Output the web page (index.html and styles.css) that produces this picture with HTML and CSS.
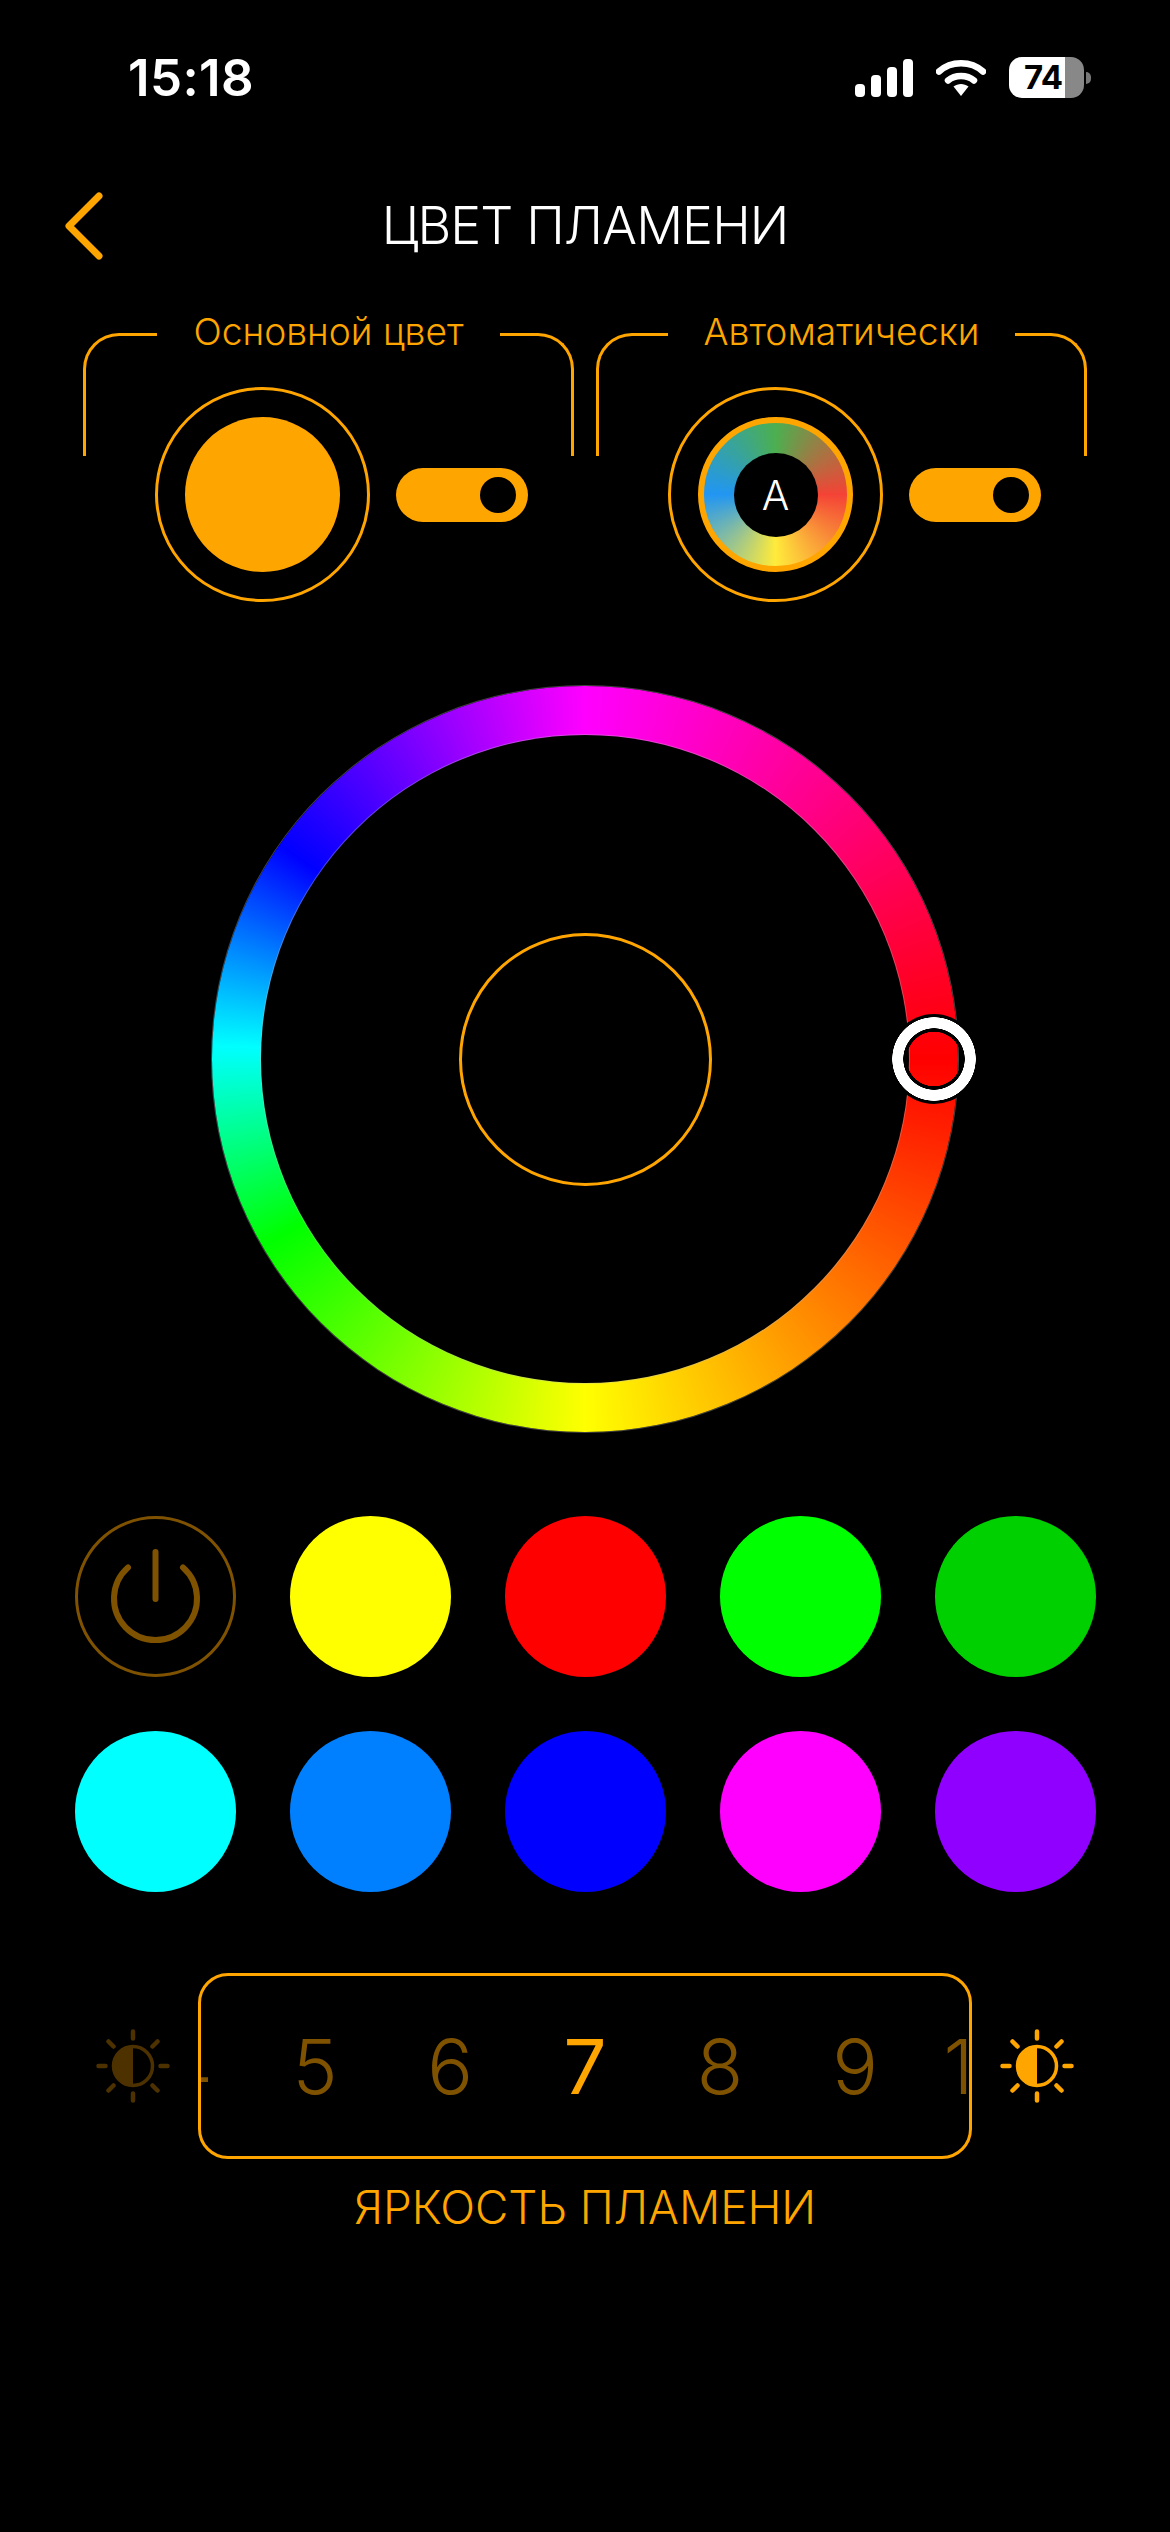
FILE: index.html
```html
<!DOCTYPE html>
<html lang="ru">
<head>
<meta charset="utf-8">
<title>Цвет пламени</title>
<link rel="stylesheet" href="styles.css">
</head>
<body>
<div class="status">
  <span class="time">15:18</span>
  <div class="status-icons">
    <svg class="signal" width="58" height="38" viewBox="0 0 58 38"><rect x="0" y="25" width="10" height="13" rx="4" fill="#fff"/><rect x="16" y="16" width="10" height="22" rx="4" fill="#fff"/><rect x="32" y="8" width="10" height="30" rx="4" fill="#fff"/><rect x="48" y="0" width="10" height="38" rx="4" fill="#fff"/></svg>
    <svg class="wifi" width="50" height="38" viewBox="0 0 50 38"><path d="M3 12.500C15 1.500 35 1.500 47 12.500" fill="none" stroke="#fff" stroke-width="6.500" stroke-linecap="round"/><path d="M12 21.500C19 15.500 31 15.500 38 21.500" fill="none" stroke="#fff" stroke-width="6.500" stroke-linecap="round"/><path d="M17.500 27.500C22 24 28 24 32.500 27.500L25 37Z" fill="#fff"/></svg>
    <div class="battery"><div class="battery-body">74</div><div class="battery-nub"></div></div>
  </div>
</div>

<header class="header">
  <svg class="back" width="38" height="68" viewBox="0 0 38 68"><path d="M34 4L4 34L34 64" fill="none" stroke="#ffa500" stroke-width="7" stroke-linecap="round" stroke-linejoin="round"/></svg>
  <h1 class="title">ЦВЕТ ПЛАМЕНИ</h1>
  <span></span>
</header>

<section class="modes">
  <div class="frame">
    <div class="frame-label">Основной цвет</div>
    <div class="frame-row">
      <div class="halo"><div class="dot"></div></div>
      <div class="toggle"><div class="knob"></div></div>
    </div>
  </div>
  <div class="frame">
    <div class="frame-label">Автоматически</div>
    <div class="frame-row">
      <div class="halo"><div class="dot dot-auto"><div class="dot-hole">A</div></div></div>
      <div class="toggle"><div class="knob"></div></div>
    </div>
  </div>
</section>

<section class="wheel">
  <div class="wheel-hole"><div class="wheel-center"></div></div>
  <div class="thumb"></div>
</section>

<section class="swatches">
  <div class="swatch power">
    <svg width="155" height="155" viewBox="0 0 155 155"><path d="M50 48.500A41.500 41.500 0 1 0 105 48.500" fill="none" stroke="#7f5200" stroke-width="6" stroke-linecap="round"/><path d="M77.500 33V80" fill="none" stroke="#7f5200" stroke-width="6" stroke-linecap="round"/></svg>
  </div>
  <div class="swatch yellow"></div>
  <div class="swatch red"></div>
  <div class="swatch lime"></div>
  <div class="swatch green"></div>
  <div class="swatch cyan"></div>
  <div class="swatch azure"></div>
  <div class="swatch blue"></div>
  <div class="swatch magenta"></div>
  <div class="swatch violet"></div>
</section>

<section class="brightness">
  <svg class="sun sun-dim" width="74" height="74" viewBox="0 0 74 74"><circle cx="37" cy="37" r="19.500" fill="none" stroke="currentColor" stroke-width="3.500"/><path d="M37 17.500A19.500 19.500 0 0 0 37 56.500Z" fill="currentColor"/><path d="M37 2.500V9.500M37 64.500V71.500M2.500 37H9.500M64.500 37H71.500M12.500 12.500L17.500 17.500M61.500 12.500L56.500 17.500M12.500 61.500L17.500 56.500M61.500 61.500L56.500 56.500" fill="none" stroke="currentColor" stroke-width="4.500" stroke-linecap="round"/></svg>
  <div class="scale">
    <span class="num num-start">4</span><span class="num">5</span><span class="num">6</span><span class="num num-on">7</span><span class="num">8</span><span class="num">9</span><span class="num num-end">10</span>
  </div>
  <svg class="sun" width="74" height="74" viewBox="0 0 74 74"><circle cx="37" cy="37" r="19.500" fill="none" stroke="currentColor" stroke-width="3.500"/><path d="M37 17.500A19.500 19.500 0 0 0 37 56.500Z" fill="currentColor"/><path d="M37 2.500V9.500M37 64.500V71.500M2.500 37H9.500M64.500 37H71.500M12.500 12.500L17.500 17.500M61.500 12.500L56.500 17.500M12.500 61.500L17.500 56.500M61.500 61.500L56.500 56.500" fill="none" stroke="currentColor" stroke-width="4.500" stroke-linecap="round"/></svg>
</section>
<div class="brightness-label">ЯРКОСТЬ ПЛАМЕНИ</div>
</body>
</html>
```

FILE: styles.css
```css
* { box-sizing: border-box; }
html, body { margin: 0; padding: 0; background: #000; }
body {
  width: 1170px;
  min-height: 2532px;
  padding-top: 57px;
  font-family: "Inter", "Liberation Sans", sans-serif;
  color: #ffa500;
  overflow: hidden;
}

/* status bar */
.status {
  display: flex;
  justify-content: space-between;
  align-items: center;
  height: 41px;
  padding: 0 79px 0 128px;
}
.time { font-size: 51px; font-weight: 600; color: #fff; line-height: 41px; letter-spacing: 0.4px; }
.status-icons { display: flex; align-items: center; gap: 23px; }
.signal, .wifi { display: block; }
.battery { display: flex; align-items: center; gap: 2px; }
.battery-body {
  width: 75px;
  height: 41px;
  border-radius: 13px;
  background: linear-gradient(90deg, #fff 56px, #888 56px);
  color: #000;
  font-size: 33px;
  font-weight: 700;
  line-height: 41px;
  padding-left: 15px;
  letter-spacing: -0.5px;
}
.battery-nub { width: 5px; height: 12px; border-radius: 0 6px 6px 0; background: #777; }

/* header */
.header {
  display: grid;
  grid-template-columns: 1fr auto 1fr;
  align-items: center;
  height: 66px;
  margin-top: 94px;
  padding: 0 65px;
}
.back { display: block; }
.title { margin: 0; font-size: 52px; font-weight: 300; color: #fff; line-height: 66px; white-space: nowrap; letter-spacing: -0.9px; }

/* mode frames */
.modes {
  display: flex;
  justify-content: center;
  gap: 22px;
  height: 123px;
  margin-top: 75px;
}
.frame {
  width: 491px;
  height: 123px;
  border: 3px solid #ffa500;
  border-bottom: 0;
  border-radius: 36px 36px 0 0;
  display: flex;
  flex-direction: column;
}
.frame-label {
  align-self: center;
  margin-top: -27px;
  padding: 0 36px;
  background: #000;
  font-size: 37.2px;
  font-weight: 300;
  line-height: 46px;
  white-space: nowrap;
}
.frame-row {
  display: flex;
  align-items: center;
  gap: 26px;
  margin-top: 32px;
  padding-left: 69px;
  flex: none;
}
.halo {
  width: 215px;
  height: 215px;
  border: 3px solid #ffa500;
  border-radius: 50%;
  display: flex;
  align-items: center;
  justify-content: center;
  flex: none;
}
.dot { width: 155px; height: 155px; border-radius: 50%; background: #ffa500; display: flex; align-items: center; justify-content: center; }
.dot-auto {
  border: 6px solid #ffa500;
  background: conic-gradient(from 90deg, #f44336, #ffeb3b, #2196f3, #4caf50, #f44336);
  background-origin: border-box;
}
.dot-hole {
  width: 84px;
  height: 84px;
  border-radius: 50%;
  background: #000;
  color: #fff;
  font-size: 41px;
  font-weight: 300;
  display: flex;
  align-items: center;
  justify-content: center;
}
.toggle {
  width: 132px;
  height: 54px;
  border-radius: 27px;
  background: #ffa500;
  display: flex;
  align-items: center;
  justify-content: flex-end;
  padding-right: 12px;
  flex: none;
}
.knob { width: 36px; height: 36px; border-radius: 50%; background: #000; }

/* colour wheel */
.wheel {
  position: relative;
  width: 746px;
  height: 746px;
  margin: 230px auto 0;
  border-radius: 50%;
  background: conic-gradient(from 90deg, #f00 0deg, #ff0 90deg, #0f0 150deg, #0ff 182deg, #00f 215deg, #f0f 270deg, #f00 360deg);
  box-shadow: 0 0 0 1px rgba(190,190,190,.35);
  display: flex;
  align-items: center;
  justify-content: center;
}
.wheel-hole {
  width: 648px;
  height: 648px;
  border-radius: 50%;
  background: #000;
  box-shadow: 0 0 0 1px rgba(190,190,190,.35);
  display: flex;
  align-items: center;
  justify-content: center;
}
.wheel-center { width: 253px; height: 253px; border: 3px solid #ffa500; border-radius: 50%; }
.thumb {
  position: absolute;
  left: 677px;
  top: 328px;
  width: 90px;
  height: 90px;
  border-radius: 50%;
  background: radial-gradient(circle, transparent 0 27px, #000 27.500px 30.500px, #fff 31px 41.500px, #000 42px);
}

/* swatches */
.swatches {
  display: grid;
  grid-template-columns: repeat(5, 161px);
  gap: 54px;
  justify-content: center;
  margin-top: 84px;
}
.swatch { width: 161px; height: 161px; border-radius: 50%; }
.power { border: 3px solid #7f5200; display: flex; align-items: center; justify-content: center; }
.yellow { background: #ff0; }
.red { background: #f00; }
.lime { background: #0f0; }
.green { background: #00d000; }
.cyan { background: #0ff; }
.azure { background: #0080ff; }
.blue { background: #00f; }
.magenta { background: #f0f; }
.violet { background: #9000ff; }

/* brightness */
.brightness {
  display: flex;
  justify-content: center;
  align-items: center;
  gap: 28px;
  margin-top: 81px;
}
.sun { display: block; flex: none; color: #ffa500; }
.sun-dim { color: #4d3200; }
.scale {
  width: 774px;
  height: 186px;
  border: 3px solid #ffa500;
  border-radius: 30px;
  display: flex;
  justify-content: center;
  align-items: center;
  overflow: hidden;
}
.num {
  flex: none;
  width: 135px;
  text-align: center;
  font-size: 76px;
  font-weight: 300;
  color: #7f5200;
  line-height: 90px;
}
.num-start, .num-end { width: 125px; }
.num-start { padding-left: 8px; }
.num-end { padding-right: 6px; }
.num-on { color: #ffa500; font-weight: 400; }
.brightness-label {
  margin-top: 26px;
  text-align: center;
  font-size: 45.800px;
  font-weight: 300;
  line-height: 46px;
}
```
